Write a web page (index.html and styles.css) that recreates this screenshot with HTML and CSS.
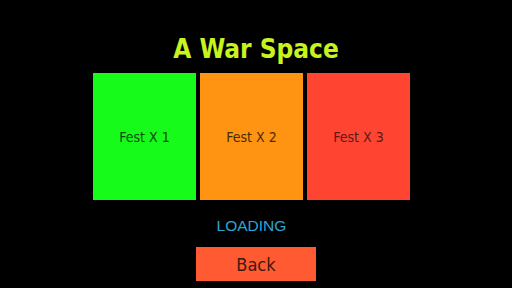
FILE: index.html
```html
<!DOCTYPE html>
<html>
<head>
<meta charset="utf-8">
<link rel="stylesheet" href="styles.css">
</head>
<body>
<main class="screen">
  <h1 class="title">A War Space</h1>
  <div class="tiles">
    <div class="tile tile-green">Fest X 1</div>
    <div class="tile tile-orange">Fest X 2</div>
    <div class="tile tile-red">Fest X 3</div>
  </div>
  <div class="loading">LOADING</div>
  <button class="back">Back</button>
</main>
</body>
</html>
```
FILE: styles.css
```css
html, body {
  margin: 0;
  padding: 0;
  background: #000;
}
.screen {
  width: 512px;
  height: 288px;
  display: flex;
  flex-direction: column;
  align-items: center;
  box-sizing: border-box;
  padding-top: 33px;
}
.title {
  margin: 0;
  font-family: "DejaVu Sans Condensed", "DejaVu Sans", sans-serif;
  font-weight: bold;
  font-size: 26px;
  line-height: 32px;
  height: 32px;
  color: #c8f31c;
}
.tiles {
  margin-top: 8px;
  margin-right: 9px;
  display: flex;
  gap: 4px;
}
.tile {
  width: 103px;
  height: 127px;
  display: flex;
  align-items: center;
  justify-content: center;
  font-family: "DejaVu Sans Condensed", "DejaVu Sans", sans-serif;
  font-size: 14px;
}
.tile-green { background: #16fb1a; color: #0d4a0d; }
.tile-orange { background: #ff9412; color: #4a2a08; }
.tile-red { background: #ff4532; color: #5a1a12; }
.loading {
  margin-top: 17px;
  margin-right: 9px;
  font-family: "Liberation Sans", Arial, sans-serif;
  font-size: 15.5px;
  line-height: 18px;
  color: #2aa6d6;
}
.back {
  margin-top: 12px;
  width: 120px;
  height: 34px;
  border: 0;
  padding: 0;
  background: #ff5a32;
  font-family: "DejaVu Sans Condensed", "DejaVu Sans", sans-serif;
  font-size: 18px;
  color: #3a1a10;
}
```
